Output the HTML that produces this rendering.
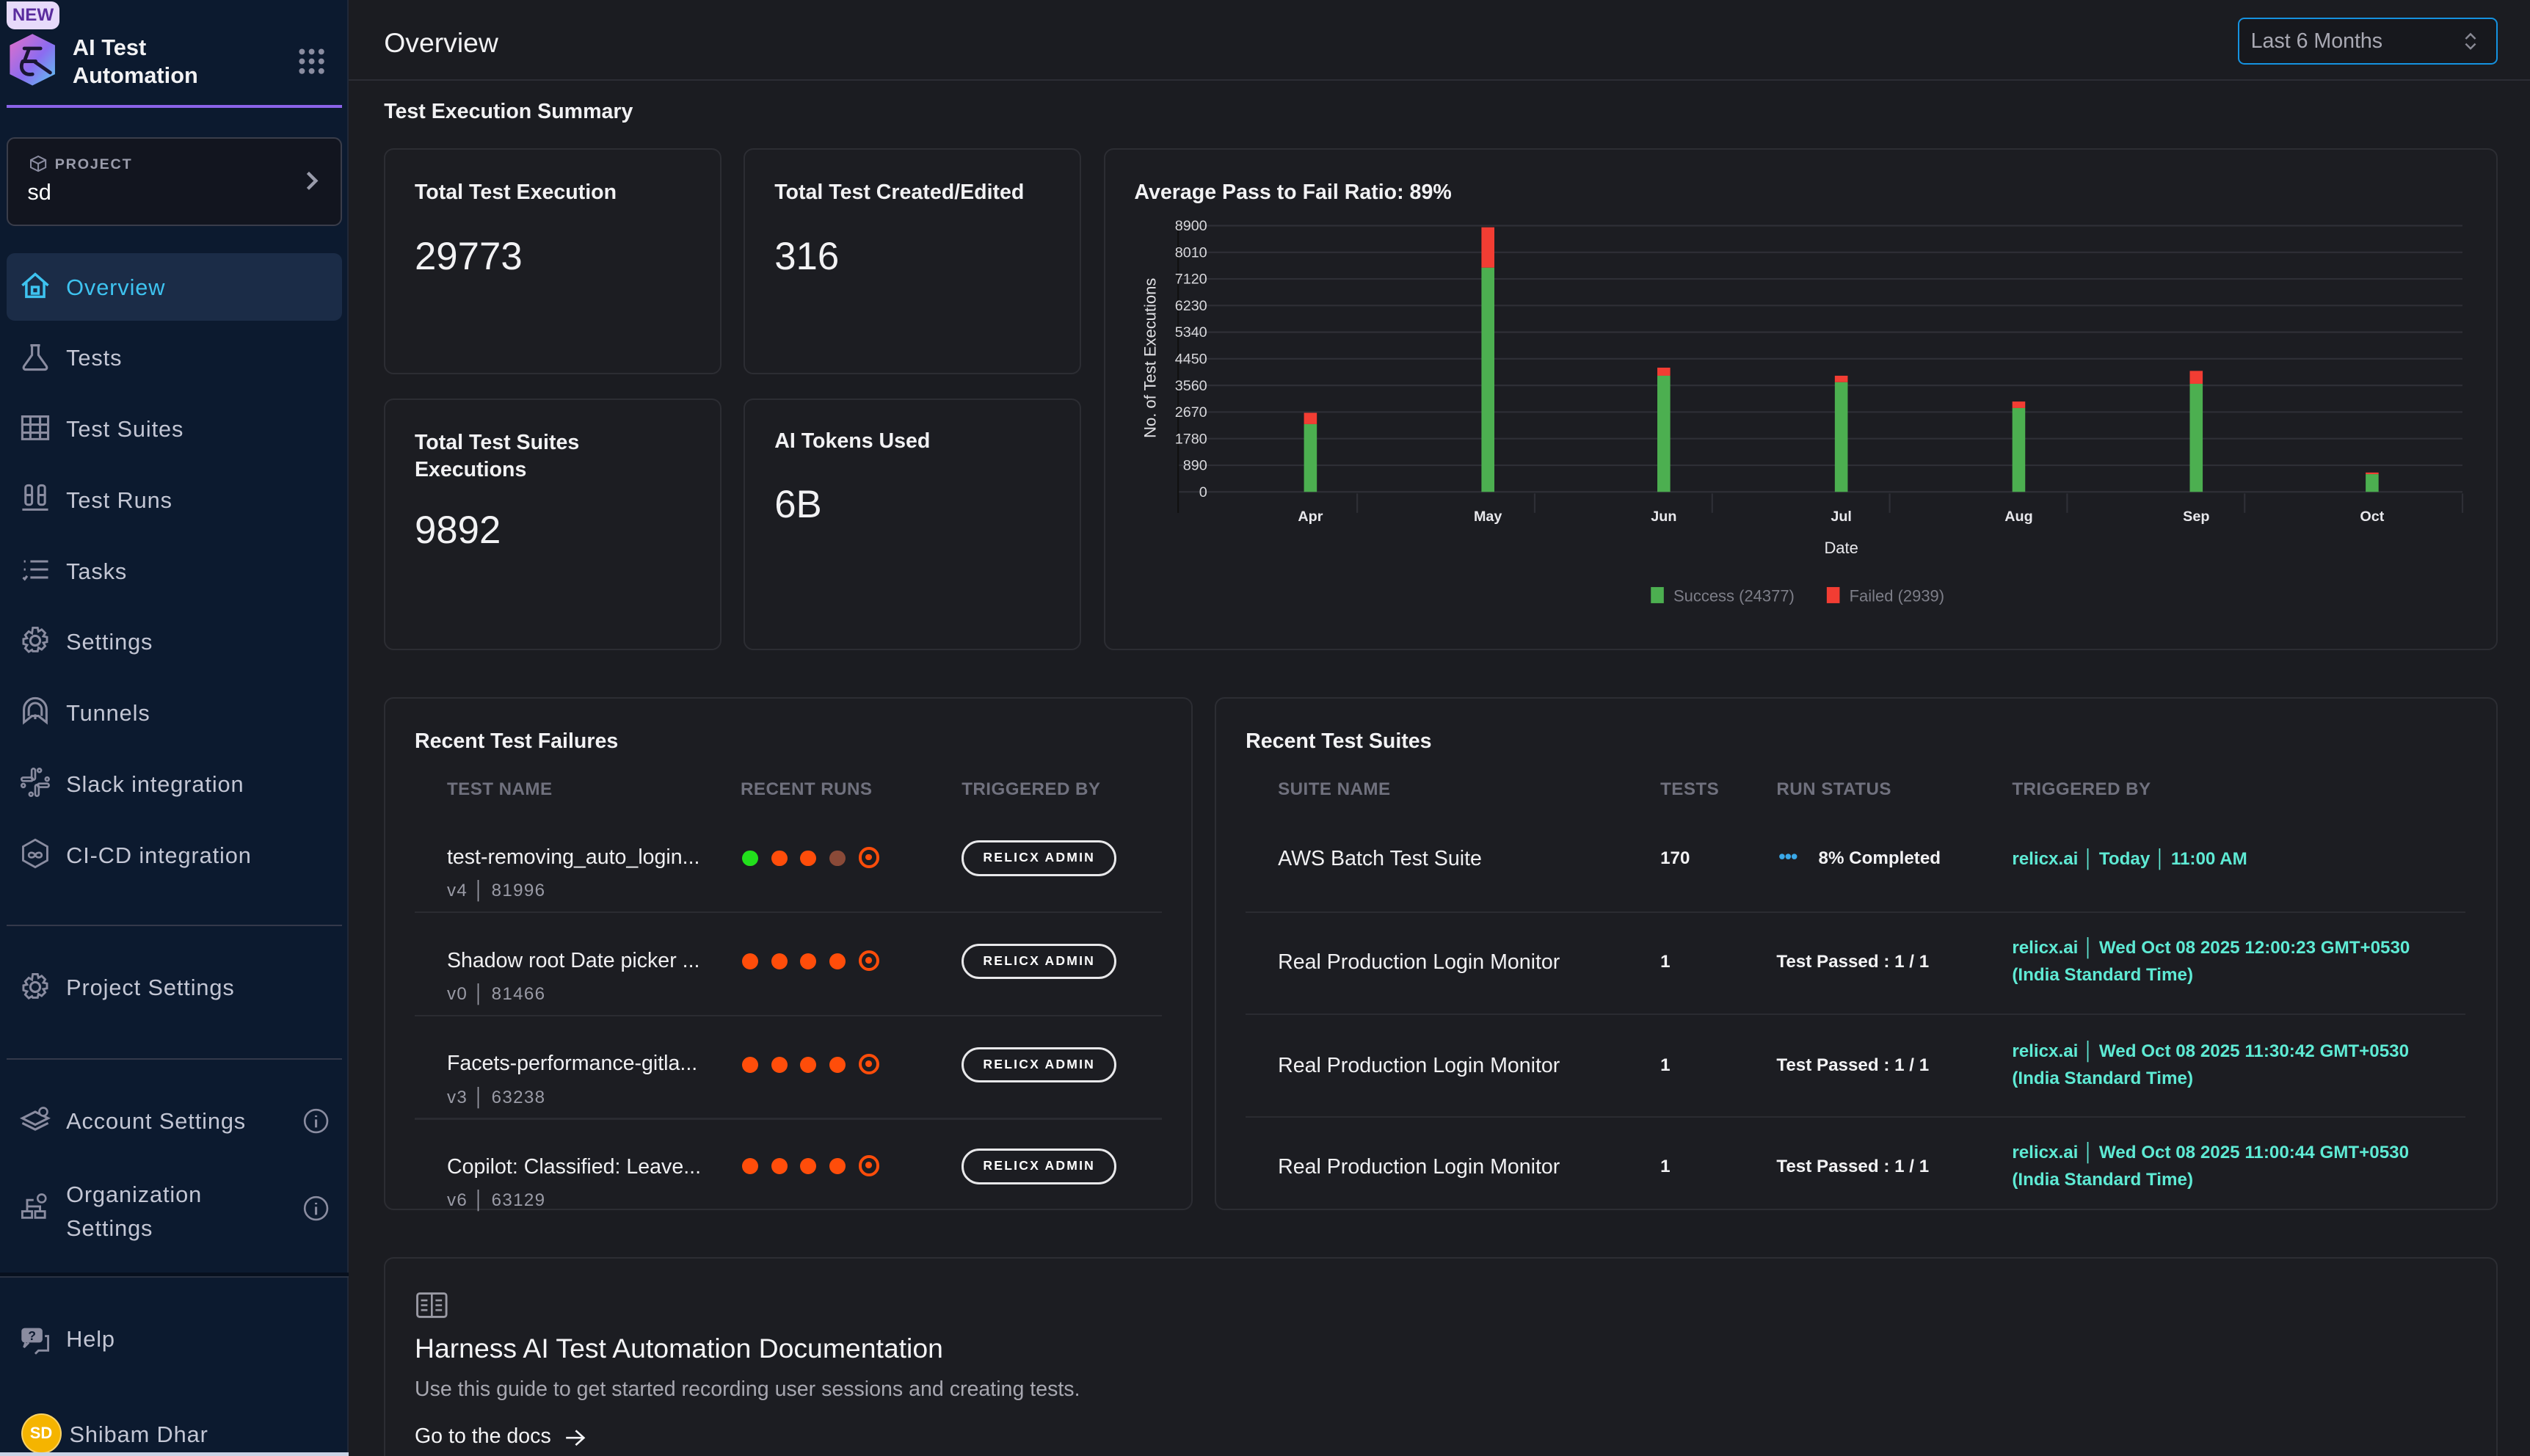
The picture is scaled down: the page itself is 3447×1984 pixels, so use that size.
<!DOCTYPE html>
<html><head><meta charset="utf-8"><style>
*{margin:0;padding:0;box-sizing:border-box}
html,body{width:3447px;height:1984px;overflow:hidden;background:#1b1c21}
#w{zoom:2.19834;width:1568px;height:903px;position:relative;font-family:"Liberation Sans",sans-serif;color:#f2f2f4;background:#1b1c21;overflow:hidden}
.a{position:absolute;white-space:nowrap}
#sb{position:absolute;left:0;top:0;width:216px;height:903px;background:#0c1a2f;border-right:1px solid #202838}
.nav{position:absolute;left:41px;font-size:14px;color:#c3c6d4;letter-spacing:.4px;line-height:16px}
.ic{position:absolute;left:12px;width:20px;height:20px}
.card{position:absolute;background:#1c1d22;border:1px solid #2c2d33;border-radius:6px}
.ct{font-size:13px;font-weight:bold;color:#f2f2f4}
.cv{font-size:24px;color:#f2f2f4}
.hd{font-size:11px;font-weight:bold;color:#70717e;letter-spacing:.2px}
.row{font-size:13px;color:#f0f0f2}
.sub{font-size:11px;color:#9a9ba6;letter-spacing:.6px}
.dot{position:absolute;width:10px;height:10px;border-radius:50%;background:#ff4d0a}
.tg{position:absolute;width:13px;height:13px;border-radius:50%;border:2px solid #ff4d0a}
.tg:after{content:"";position:absolute;left:2.5px;top:2.5px;width:4px;height:4px;border-radius:50%;background:#ff4d0a}
.btn{position:absolute;left:596px;width:96px;height:22px;border:1.5px solid #e8e8ea;border-radius:11px;font-size:8px;font-weight:bold;letter-spacing:1px;text-align:center;line-height:19px;color:#fff}
.sep{position:absolute;height:1px;background:#2a2b31}
.cy{color:#5eead4;font-size:11px;font-weight:bold;line-height:17px}
</style></head><body><div id="w">
<div id="sb">
 <div class="a" style="left:4px;top:1px;width:33px;height:17px;background:#e7dafa;border-radius:0 5px 5px 5px;color:#5a2c9e;font-size:11px;font-weight:bold;text-align:center;line-height:17px">NEW</div>
 <svg class="a" style="left:4px;top:20px" width="32" height="34" viewBox="0 0 32 34"><defs><linearGradient id="lg" x1="0" y1="0" x2="1" y2="1"><stop offset="0" stop-color="#e46fc8"/><stop offset=".55" stop-color="#8b6cf0"/><stop offset="1" stop-color="#5cc8f0"/></linearGradient></defs><polygon points="16,1 30,8 30,26 16,33 2,26 2,8" fill="url(#lg)"/><path d="M11 10h10M14 10l-3 8h7M10 18c-2 4 0 9 6 8M17 18l10 7" stroke="#1a1633" stroke-width="2.2" fill="none" stroke-linecap="round"/></svg>
 <div class="a" style="left:45px;top:21px;font-size:14px;font-weight:bold;line-height:17px">AI Test<br>Automation</div>
 <svg class="a" style="left:185px;top:30px" width="16" height="16"><g fill="#8a8ca0"><circle cx="2" cy="2" r="1.8"/><circle cx="8" cy="2" r="1.8"/><circle cx="14" cy="2" r="1.8"/><circle cx="2" cy="8" r="1.8"/><circle cx="8" cy="8" r="1.8"/><circle cx="14" cy="8" r="1.8"/><circle cx="2" cy="14" r="1.8"/><circle cx="8" cy="14" r="1.8"/><circle cx="14" cy="14" r="1.8"/></g></svg>
 <div class="a" style="left:4px;top:65px;width:208px;height:2px;background:#8b63e8"></div>
 <div class="a" style="left:4px;top:85px;width:208px;height:55px;background:#12151f;border:1px solid #3a3d4a;border-radius:5px"></div>
 <svg class="a" style="left:18px;top:96px" width="11" height="11" viewBox="0 0 12 12"><path d="M6 1l5 2.5v5L6 11 1 8.5v-5zM1 3.5L6 6l5-2.5M6 6v5" stroke="#8a8ca0" fill="none" stroke-width="1"/></svg>
 <div class="a" style="left:34px;top:97px;font-size:9px;font-weight:bold;color:#9a9cab;letter-spacing:.8px">PROJECT</div>
 <div class="a" style="left:17px;top:111px;font-size:14px;color:#fff">sd</div>
 <svg class="a" style="left:189px;top:105px" width="10" height="14"><path d="M2 2l5 5-5 5" stroke="#9a9cab" stroke-width="2" fill="none"/></svg>
 <div class="a" style="left:4px;top:157px;width:208px;height:42px;background:#1b2c47;border-radius:5px"></div>
 <svg class="ic" style="top:167px" viewBox="0 0 20 20"><path d="M2 10L10 3l8 7M4.5 8v9h11V8M8 11h4v4H8z" stroke="#3ec3f0" stroke-width="1.6" fill="none"/></svg>
 <div class="nav" style="top:170px;color:#3ec3f0">Overview</div>
 <svg class="ic" style="top:211px" viewBox="0 0 20 20"><path d="M7 3h6M8 3v6L3 16c-.5 1 0 2 1 2h12c1 0 1.5-1 1-2l-5-7V3" stroke="#8a8ca0" stroke-width="1.4" fill="none"/></svg>
 <div class="nav" style="top:214px">Tests</div>
 <svg class="ic" style="top:255px" viewBox="0 0 20 20"><path d="M2 3h16v14H2zM2 8h16M2 13h16M7 3v14M13 3v14" stroke="#8a8ca0" stroke-width="1.4" fill="none"/></svg>
 <div class="nav" style="top:258px">Test Suites</div>
 <svg class="ic" style="top:299px" viewBox="0 0 20 20"><rect x="4" y="2" width="4" height="12" rx="1.5" stroke="#8a8ca0" stroke-width="1.4" fill="none"/><rect x="12" y="2" width="4" height="12" rx="1.5" stroke="#8a8ca0" stroke-width="1.4" fill="none"/><path d="M2 17h16M4 8h4M12 8h4" stroke="#8a8ca0" stroke-width="1.4"/></svg>
 <div class="nav" style="top:302px">Test Runs</div>
 <svg class="ic" style="top:343px" viewBox="0 0 20 20"><path d="M7 5h11M7 10h11M7 15h11M3 5h1M3 10h1M2.5 15l1 1 1.5-2" stroke="#8a8ca0" stroke-width="1.4" fill="none"/></svg>
 <div class="nav" style="top:346px">Tasks</div>
 <svg class="ic" style="top:387px" viewBox="0 0 20 20"><circle cx="10" cy="10" r="3" stroke="#8a8ca0" stroke-width="1.4" fill="none"/><path d="M8.5 2h3l.5 2.3 2-1.2 2.2 2.2-1.2 2 2.3.5v3l-2.3.5 1.2 2-2.2 2.2-2-1.2-.5 2.3h-3L8 15.7l-2 1.2-2.2-2.2 1.2-2L2.7 12V9l2.3-.5-1.2-2L6 4.3l2 1.2z" stroke="#8a8ca0" stroke-width="1.3" fill="none"/></svg>
 <div class="nav" style="top:390px">Settings</div>
 <svg class="ic" style="top:431px" viewBox="0 0 20 20"><path d="M3 17V9a7 7 0 0114 0v8l-5-4H8zM6 13V9a4 4 0 018 0v4M10 12v3" stroke="#8a8ca0" stroke-width="1.4" fill="none"/></svg>
 <div class="nav" style="top:434px">Tunnels</div>
 <svg class="ic" style="top:475px" viewBox="0 0 20 20" fill="none" stroke="#8a8ca0" stroke-width="1.2"><rect x="1.5" y="7" width="7" height="2.2" rx="1.1"/><rect x="11.5" y="10.8" width="7" height="2.2" rx="1.1"/><rect x="7.8" y="1.5" width="2.2" height="7" rx="1.1"/><rect x="10" y="11.5" width="2.2" height="7" rx="1.1"/><circle cx="12.6" cy="2.6" r="1.1"/><circle cx="7.4" cy="17.4" r="1.1"/><circle cx="2.6" cy="12" r="1.1"/><circle cx="17.4" cy="8" r="1.1"/></svg>
 <div class="nav" style="top:478px">Slack integration</div>
 <svg class="ic" style="top:519px" viewBox="0 0 20 20"><path d="M10 1.5l7.5 4.2v8.6L10 18.5l-7.5-4.2V5.7z" stroke="#8a8ca0" stroke-width="1.3" fill="none"/><path d="M6 11c0-2 3-2 4 0s4 2 4 0-3-2-4 0-4 2-4 0z" stroke="#8a8ca0" stroke-width="1.2" fill="none"/></svg>
 <div class="nav" style="top:522px">CI-CD integration</div>
 <div class="a" style="left:4px;top:573px;width:208px;height:1px;background:#34394a"></div>
 <svg class="ic" style="top:602px" viewBox="0 0 20 20"><circle cx="10" cy="10" r="3" stroke="#8a8ca0" stroke-width="1.4" fill="none"/><path d="M8.5 2h3l.5 2.3 2-1.2 2.2 2.2-1.2 2 2.3.5v3l-2.3.5 1.2 2-2.2 2.2-2-1.2-.5 2.3h-3L8 15.7l-2 1.2-2.2-2.2 1.2-2L2.7 12V9l2.3-.5-1.2-2L6 4.3l2 1.2z" stroke="#8a8ca0" stroke-width="1.3" fill="none"/></svg>
 <div class="nav" style="top:604px">Project Settings</div>
 <div class="a" style="left:4px;top:656px;width:208px;height:1px;background:#34394a"></div>
 <svg class="ic" style="top:684px" viewBox="0 0 20 20"><path d="M2 12l8 4 8-4M2 9l8 4 8-4-8-4z" stroke="#8a8ca0" stroke-width="1.4" fill="none"/><circle cx="15" cy="5" r="2.5" stroke="#8a8ca0" stroke-width="1.2" fill="#0c1a2f"/></svg>
 <div class="nav" style="top:687px">Account Settings</div>
 <svg class="a" style="left:188px;top:687px" width="16" height="16"><circle cx="8" cy="8" r="7" stroke="#8a8ca0" fill="none" stroke-width="1.2"/><path d="M8 7v5M8 4.5v1" stroke="#8a8ca0" stroke-width="1.4"/></svg>
 <svg class="ic" style="top:738px" viewBox="0 0 20 20"><path d="M2 13h6v4H2zM10 13h6v4h-6zM5 13v-3h8v3M5 10V6h4" stroke="#8a8ca0" stroke-width="1.3" fill="none"/><circle cx="14" cy="5" r="2.5" stroke="#8a8ca0" stroke-width="1.2" fill="none"/></svg>
 <div class="nav" style="top:730px;line-height:21px">Organization<br>Settings</div>
 <svg class="a" style="left:188px;top:741px" width="16" height="16"><circle cx="8" cy="8" r="7" stroke="#8a8ca0" fill="none" stroke-width="1.2"/><path d="M8 7v5M8 4.5v1" stroke="#8a8ca0" stroke-width="1.4"/></svg>
 <div class="a" style="left:0;top:789px;width:216px;height:3px;background:#07101e;border-bottom:1px solid #2a3242"></div>
 <svg class="ic" style="top:820px" viewBox="0 0 20 20"><rect x="1.5" y="3" width="13" height="9" rx="2" fill="#8a8ca0"/><path d="M4 12l-1 3 3-3M16 8h2v9h-6l-2 2" stroke="#8a8ca0" stroke-width="1.3" fill="none"/><text x="8" y="10.5" font-size="8" font-weight="bold" text-anchor="middle" fill="#0c1a2f" font-family="Liberation Sans">?</text></svg>
 <div class="nav" style="top:822px">Help</div>
 <div class="a" style="left:13px;top:876px;width:25px;height:25px;border-radius:50%;background:#f5b400;border:1px solid #fff6;color:#fff;font-size:10px;font-weight:bold;text-align:center;line-height:23px">SD</div>
 <div class="nav" style="left:43px;top:881px">Shibam Dhar</div>
 <div class="a" style="left:0;top:900px;width:216px;height:3px;background:#c9d3e6"></div>
</div>

<div class="a" style="left:238px;top:17px;font-size:17px">Overview</div>
<div class="a" style="left:216px;top:49px;width:1352px;height:1px;background:#2c2d34"></div>
<div class="a" style="left:1387px;top:11px;width:161px;height:29px;border:1.2px solid #1592e0;border-radius:4px;background:#17181d"></div>
<div class="a" style="left:1395px;top:18px;font-size:13px;color:#a9a9b3">Last 6 Months</div>
<svg class="a" style="left:1526px;top:19px" width="10" height="13"><path d="M2 5l3-3 3 3M2 8l3 3 3-3" stroke="#8a8a95" stroke-width="1.1" fill="none"/></svg>
<div class="a ct" style="left:238px;top:62px">Test Execution Summary</div>

<div class="card" style="left:238px;top:92px;width:209px;height:140px"></div>
<div class="a ct" style="left:257px;top:112px">Total Test Execution</div>
<div class="a cv" style="left:257px;top:145px">29773</div>
<div class="card" style="left:461px;top:92px;width:209px;height:140px"></div>
<div class="a ct" style="left:480px;top:112px">Total Test Created/Edited</div>
<div class="a cv" style="left:480px;top:145px">316</div>
<div class="card" style="left:238px;top:247px;width:209px;height:156px"></div>
<div class="a ct" style="left:257px;top:266px;line-height:17px">Total Test Suites<br>Executions</div>
<div class="a cv" style="left:257px;top:315px">9892</div>
<div class="card" style="left:461px;top:247px;width:209px;height:156px"></div>
<div class="a ct" style="left:480px;top:266px">AI Tokens Used</div>
<div class="a cv" style="left:480px;top:299px">6B</div>

<div class="card" style="left:684px;top:92px;width:864px;height:311px"></div>
<div class="a ct" style="left:703px;top:112px">Average Pass to Fail Ratio: 89%</div>
<svg class="a" style="left:684px;top:92px" width="864" height="300" font-family="Liberation Sans">
 <g stroke="#2e2f36" stroke-width="1">
  <line x1="46" x2="842" y1="48" y2="48"/><line x1="46" x2="842" y1="64.5" y2="64.5"/><line x1="46" x2="842" y1="81" y2="81"/><line x1="46" x2="842" y1="97.5" y2="97.5"/><line x1="46" x2="842" y1="114" y2="114"/><line x1="46" x2="842" y1="130.5" y2="130.5"/><line x1="46" x2="842" y1="147" y2="147"/><line x1="46" x2="842" y1="163.5" y2="163.5"/><line x1="46" x2="842" y1="180" y2="180"/><line x1="46" x2="842" y1="196.5" y2="196.5"/><line x1="46" x2="842" y1="213" y2="213"/>
  <line x1="46" x2="46" y1="48" y2="226" stroke="#111"/>
  <line x1="157" x2="157" y1="214" y2="226"/><line x1="267" x2="267" y1="214" y2="226"/><line x1="377" x2="377" y1="214" y2="226"/><line x1="487" x2="487" y1="214" y2="226"/><line x1="597" x2="597" y1="214" y2="226"/><line x1="707" x2="707" y1="214" y2="226"/><line x1="842" x2="842" y1="214" y2="226"/>
 </g>
 <g font-size="9" fill="#d8d8dc" text-anchor="end">
  <text x="64" y="51">8900</text><text x="64" y="67.5">8010</text><text x="64" y="84">7120</text><text x="64" y="100.5">6230</text><text x="64" y="117">5340</text><text x="64" y="133.5">4450</text><text x="64" y="150">3560</text><text x="64" y="166.5">2670</text><text x="64" y="183">1780</text><text x="64" y="199.5">890</text><text x="64" y="216">0</text>
 </g>
 <text transform="translate(32,130) rotate(-90)" font-size="10" fill="#e0e0e4" text-anchor="middle">No. of Test Executions</text>
 <g fill="#4caf50"><rect x="124" y="171" width="8" height="42"/><rect x="234" y="74" width="8" height="139"/><rect x="343" y="141" width="8" height="72"/><rect x="453" y="145" width="8" height="68"/><rect x="563" y="161" width="8" height="52"/><rect x="673" y="146" width="8" height="67"/><rect x="782" y="202" width="8" height="11"/></g>
 <g fill="#f23d33"><rect x="124" y="164" width="8" height="7"/><rect x="234" y="49" width="8" height="25"/><rect x="343" y="136" width="8" height="5"/><rect x="453" y="141" width="8" height="4"/><rect x="563" y="157" width="8" height="4"/><rect x="673" y="138" width="8" height="8"/><rect x="782" y="201" width="8" height="1"/></g>
 <g font-size="9" font-weight="bold" fill="#e8e8ec" text-anchor="middle"><text x="128" y="231">Apr</text><text x="238" y="231">May</text><text x="347" y="231">Jun</text><text x="457" y="231">Jul</text><text x="567" y="231">Aug</text><text x="677" y="231">Sep</text><text x="786" y="231">Oct</text></g>
 <text x="457" y="251" font-size="10" fill="#e8e8ec" text-anchor="middle">Date</text>
 <rect x="339" y="272" width="8" height="10" fill="#4caf50"/><text x="353" y="281" font-size="10" fill="#7d7e88">Success (24377)</text>
 <rect x="448" y="272" width="8" height="10" fill="#f23d33"/><text x="462" y="281" font-size="10" fill="#7d7e88">Failed (2939)</text>
</svg>

<div class="card" style="left:238px;top:432px;width:501px;height:318px"></div>
<div class="a ct" style="left:257px;top:452px">Recent Test Failures</div>
<div class="a hd" style="left:277px;top:483px">TEST NAME</div>
<div class="a hd" style="left:459px;top:483px">RECENT RUNS</div>
<div class="a hd" style="left:596px;top:483px">TRIGGERED BY</div>

<div class="a row" style="left:277px;top:524px">test-removing_auto_login...</div>
<div class="a sub" style="left:277px;top:546px">v4 │ 81996</div>
<div class="dot" style="left:460px;top:527px;background:#22e01c"></div><div class="dot" style="left:478px;top:527px"></div><div class="dot" style="left:496px;top:527px"></div><div class="dot" style="left:514px;top:527px;background:#8a4a38"></div><div class="tg" style="left:532px;top:525px"></div>
<div class="btn" style="top:521px">RELICX ADMIN</div>
<div class="sep" style="left:257px;top:565px;width:463px"></div>

<div class="a row" style="left:277px;top:588px">Shadow root Date picker ...</div>
<div class="a sub" style="left:277px;top:610px">v0 │ 81466</div>
<div class="dot" style="left:460px;top:591px"></div><div class="dot" style="left:478px;top:591px"></div><div class="dot" style="left:496px;top:591px"></div><div class="dot" style="left:514px;top:591px"></div><div class="tg" style="left:532px;top:589px"></div>
<div class="btn" style="top:585px">RELICX ADMIN</div>
<div class="sep" style="left:257px;top:629px;width:463px"></div>

<div class="a row" style="left:277px;top:652px">Facets-performance-gitla...</div>
<div class="a sub" style="left:277px;top:674px">v3 │ 63238</div>
<div class="dot" style="left:460px;top:655px"></div><div class="dot" style="left:478px;top:655px"></div><div class="dot" style="left:496px;top:655px"></div><div class="dot" style="left:514px;top:655px"></div><div class="tg" style="left:532px;top:653px"></div>
<div class="btn" style="top:649px">RELICX ADMIN</div>
<div class="sep" style="left:257px;top:693px;width:463px"></div>

<div class="a row" style="left:277px;top:716px">Copilot: Classified: Leave...</div>
<div class="a sub" style="left:277px;top:738px">v6 │ 63129</div>
<div class="dot" style="left:460px;top:718px"></div><div class="dot" style="left:478px;top:718px"></div><div class="dot" style="left:496px;top:718px"></div><div class="dot" style="left:514px;top:718px"></div><div class="tg" style="left:532px;top:716px"></div>
<div class="btn" style="top:712px">RELICX ADMIN</div>

<div class="card" style="left:753px;top:432px;width:795px;height:318px"></div>
<div class="a ct" style="left:772px;top:452px">Recent Test Suites</div>
<div class="a hd" style="left:792px;top:483px">SUITE NAME</div>
<div class="a hd" style="left:1029px;top:483px">TESTS</div>
<div class="a hd" style="left:1101px;top:483px">RUN STATUS</div>
<div class="a hd" style="left:1247px;top:483px">TRIGGERED BY</div>

<div class="a row" style="left:792px;top:525px">AWS Batch Test Suite</div>
<div class="a" style="left:1029px;top:526px;font-size:11px;font-weight:bold">170</div>
<div class="a" style="left:1102px;top:526px;font-size:8px;color:#3aa8e8;letter-spacing:-1px">●●●</div>
<div class="a" style="left:1127px;top:526px;font-size:11px;font-weight:bold">8% Completed</div>
<div class="a cy" style="left:1247px;top:524px">relicx.ai │ Today │ 11:00 AM</div>
<div class="sep" style="left:772px;top:565px;width:756px"></div>

<div class="a row" style="left:792px;top:589px">Real Production Login Monitor</div>
<div class="a" style="left:1029px;top:590px;font-size:11px;font-weight:bold">1</div>
<div class="a" style="left:1101px;top:590px;font-size:11px;font-weight:bold">Test Passed : 1 / 1</div>
<div class="a cy" style="left:1247px;top:579px">relicx.ai │ Wed Oct 08 2025 12:00:23 GMT+0530<br>(India Standard Time)</div>
<div class="sep" style="left:772px;top:628px;width:756px"></div>

<div class="a row" style="left:792px;top:653px">Real Production Login Monitor</div>
<div class="a" style="left:1029px;top:654px;font-size:11px;font-weight:bold">1</div>
<div class="a" style="left:1101px;top:654px;font-size:11px;font-weight:bold">Test Passed : 1 / 1</div>
<div class="a cy" style="left:1247px;top:643px">relicx.ai │ Wed Oct 08 2025 11:30:42 GMT+0530<br>(India Standard Time)</div>
<div class="sep" style="left:772px;top:692px;width:756px"></div>

<div class="a row" style="left:792px;top:716px">Real Production Login Monitor</div>
<div class="a" style="left:1029px;top:717px;font-size:11px;font-weight:bold">1</div>
<div class="a" style="left:1101px;top:717px;font-size:11px;font-weight:bold">Test Passed : 1 / 1</div>
<div class="a cy" style="left:1247px;top:706px">relicx.ai │ Wed Oct 08 2025 11:00:44 GMT+0530<br>(India Standard Time)</div>

<div class="card" style="left:238px;top:779px;width:1310px;height:140px"></div>
<svg class="a" style="left:258px;top:801px" width="20" height="16"><rect x="0.7" y="0.7" width="18" height="14.5" rx="1.5" stroke="#9a9aa4" stroke-width="1.3" fill="none"/><path d="M9.7 1v14M3 5h4M3 8h4M3 11h4M12 5h4M12 8h4M12 11h4" stroke="#9a9aa4" stroke-width="1.2"/></svg>
<div class="a" style="left:257px;top:826px;font-size:17px;color:#f4f4f6">Harness AI Test Automation Documentation</div>
<div class="a" style="left:257px;top:854px;font-size:13px;color:#a7a7b0">Use this guide to get started recording user sessions and creating tests.</div>
<div class="a" style="left:257px;top:883px;font-size:13px;color:#f4f4f6">Go to the docs</div>
<svg class="a" style="left:350px;top:885px" width="14" height="12"><path d="M1 6h11M7 1.5L12 6l-5 4.5" stroke="#f4f4f6" stroke-width="1.2" fill="none"/></svg>
</div></body></html>
